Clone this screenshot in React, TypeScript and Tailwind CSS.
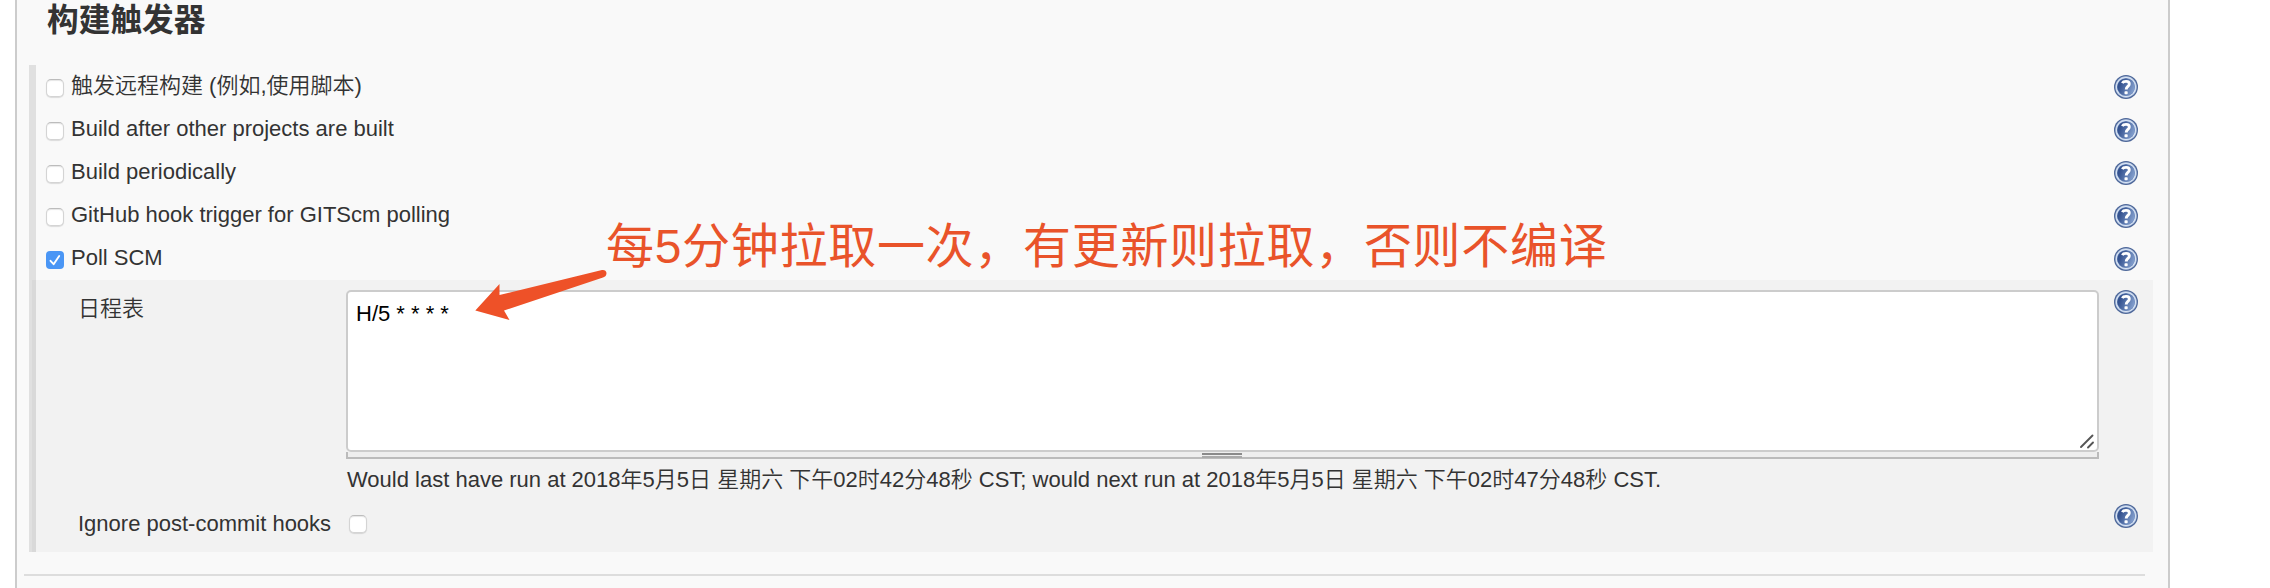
function Help() {
  return (
    <svg className="block size-6 shrink-0" viewBox="0 0 24 24">
      <defs>
        <linearGradient id="helpFill" x1="0" y1="0.3" x2="1" y2="0.7">
          <stop offset="0.15" stopColor="#34528f" />
          <stop offset="1" stopColor="#86a2d0" />
        </linearGradient>
      </defs>
      <circle cx="12" cy="12" r="12" fill="#4d6799" />
      <circle cx="12" cy="12" r="10.7" fill="#bccce6" />
      <circle cx="12" cy="12" r="10" fill="#dde8f6" />
      <circle cx="12" cy="12" r="9.1" fill="#6f8bbd" />
      <circle cx="12" cy="12" r="8.6" fill="url(#helpFill)" />
      <path d="M8.3 8.1C9.4 6 15.3 5.4 15.3 9C15.3 11.6 12.2 11.4 12.2 14.6" fill="none" stroke="#fff" strokeWidth="2.9" />
      <rect x="10.5" y="16.2" width="3.2" height="3" rx="0.8" fill="#fff" />
    </svg>
  );
}

function Checkbox({ checked = false }: { checked?: boolean }) {
  if (checked) {
    return (
      <span className="block size-[18px] shrink-0 rounded-[4px] bg-[#4a96f5]">
        <svg className="block size-full" viewBox="0 0 18 18">
          <path d="M4.5 9.8L7.6 13.2L13.2 5" fill="none" stroke="#fff" strokeWidth="1.9" strokeLinecap="round" strokeLinejoin="round" />
        </svg>
      </span>
    );
  }
  return <span className="block size-[18px] shrink-0 rounded-[5px] border border-[#d4d4d4] border-t-[#bcbcbc] bg-white shadow-[0_1px_1px_rgba(0,0,0,0.12),inset_0_1px_1px_rgba(0,0,0,0.1)]" />;
}

const triggers = [
  { label: "触发远程构建 (例如,使用脚本)" },
  { label: "Build after other projects are built" },
  { label: "Build periodically" },
  { label: "GitHub hook trigger for GITScm polling" },
  { label: "Poll SCM", checked: true },
];

export default function App() {
  return (
    <div className="relative h-[588px] w-[2270px] overflow-hidden bg-white pl-[15px] font-['Liberation_Sans','Noto_Sans_CJK_SC',sans-serif] text-[22px] leading-[26px] font-[350] text-[#333]">
      <div className="flex h-full w-[2155px] flex-col border-x-2 border-[#ccc] bg-[#f9f9f9]">
        <h2 className="h-[65px] pl-[30px] text-[31.7px] leading-[40px] font-bold">构建触发器</h2>
        <div className="ml-3 w-[2124px] border-l-[7px] border-[#e0e0e0]">
          {triggers.map((t) => (
            <div key={t.label} className="flex h-[43px] items-start pr-[15px] pl-[10px]">
              <div className="pt-[14px]">
                <Checkbox checked={t.checked} />
              </div>
              <span className="grow pt-2 pl-[7px] whitespace-nowrap">{t.label}</span>
              <div className="pt-[10px]">
                <Help />
              </div>
            </div>
          ))}
          <div className="-ml-1 h-[272px] border-l-4 border-[#d9d9d9] bg-[#f2f2f2]">
            <div className="flex h-[224px] items-start pt-[10px] pl-[42px]">
              <div className="w-[268px] pt-[6px]">日程表</div>
              <div className="w-[1753px]">
                <div className="relative h-[162px] rounded-[5px] border-2 border-[#ccc] bg-white px-2 py-[9px] text-black">
                  H/5 * * * *
                  <svg className="absolute right-[2px] bottom-px size-4" viewBox="0 0 16 16">
                    <path d="M2 14L13.5 2.5M9 14.5L14 9.5" stroke="#555" strokeWidth="1.9" strokeLinecap="round" />
                  </svg>
                </div>
                <div className="flex h-[7px] justify-center border-x-2 border-b-2 border-[#bbb] bg-[#eee] pt-px pr-[2px]">
                  <div className="h-[5px] w-10 border-t-2 border-b-2 border-t-[#8a8a8a] border-b-[#aaa]" />
                </div>
                <div className="pt-2 pl-px whitespace-nowrap">
                  Would last have run at 2018年5月5日 星期六 下午02时42分48秒 CST; would next run at 2018年5月5日 星期六 下午02时47分48秒 CST.
                </div>
              </div>
              <div className="ml-[15px]">
                <Help />
              </div>
            </div>
            <div className="flex items-start pl-[42px]">
              <span className="w-[271px] pt-[7px] whitespace-nowrap">Ignore post-commit hooks</span>
              <div className="pt-[11px]">
                <Checkbox />
              </div>
              <div className="ml-[1747px]">
                <Help />
              </div>
            </div>
          </div>
        </div>
        <div className="mt-[22px] ml-[7px] h-[2px] w-[2121px] bg-[#ddd]" />
      </div>
      <div className="absolute top-[212px] left-[606px] font-['Liberation_Sans','Noto_Sans_CJK_SC',sans-serif] text-[48px] leading-[70px] font-normal tracking-[0.7px] whitespace-nowrap text-[#e9532a]">
        每5分钟拉取一次，有更新则拉取，否则不编译
      </div>
      <svg className="absolute top-[262px] left-[470px] h-16 w-[150px]" viewBox="0 0 150 64">
        <path d="M5.3 48.5L29.5 22V33L132 8Q136 7.5 136.5 11Q136.5 14.5 133 15.5L34 48.5L39.5 58Z" fill="#ee5128" />
      </svg>
    </div>
  );
}
